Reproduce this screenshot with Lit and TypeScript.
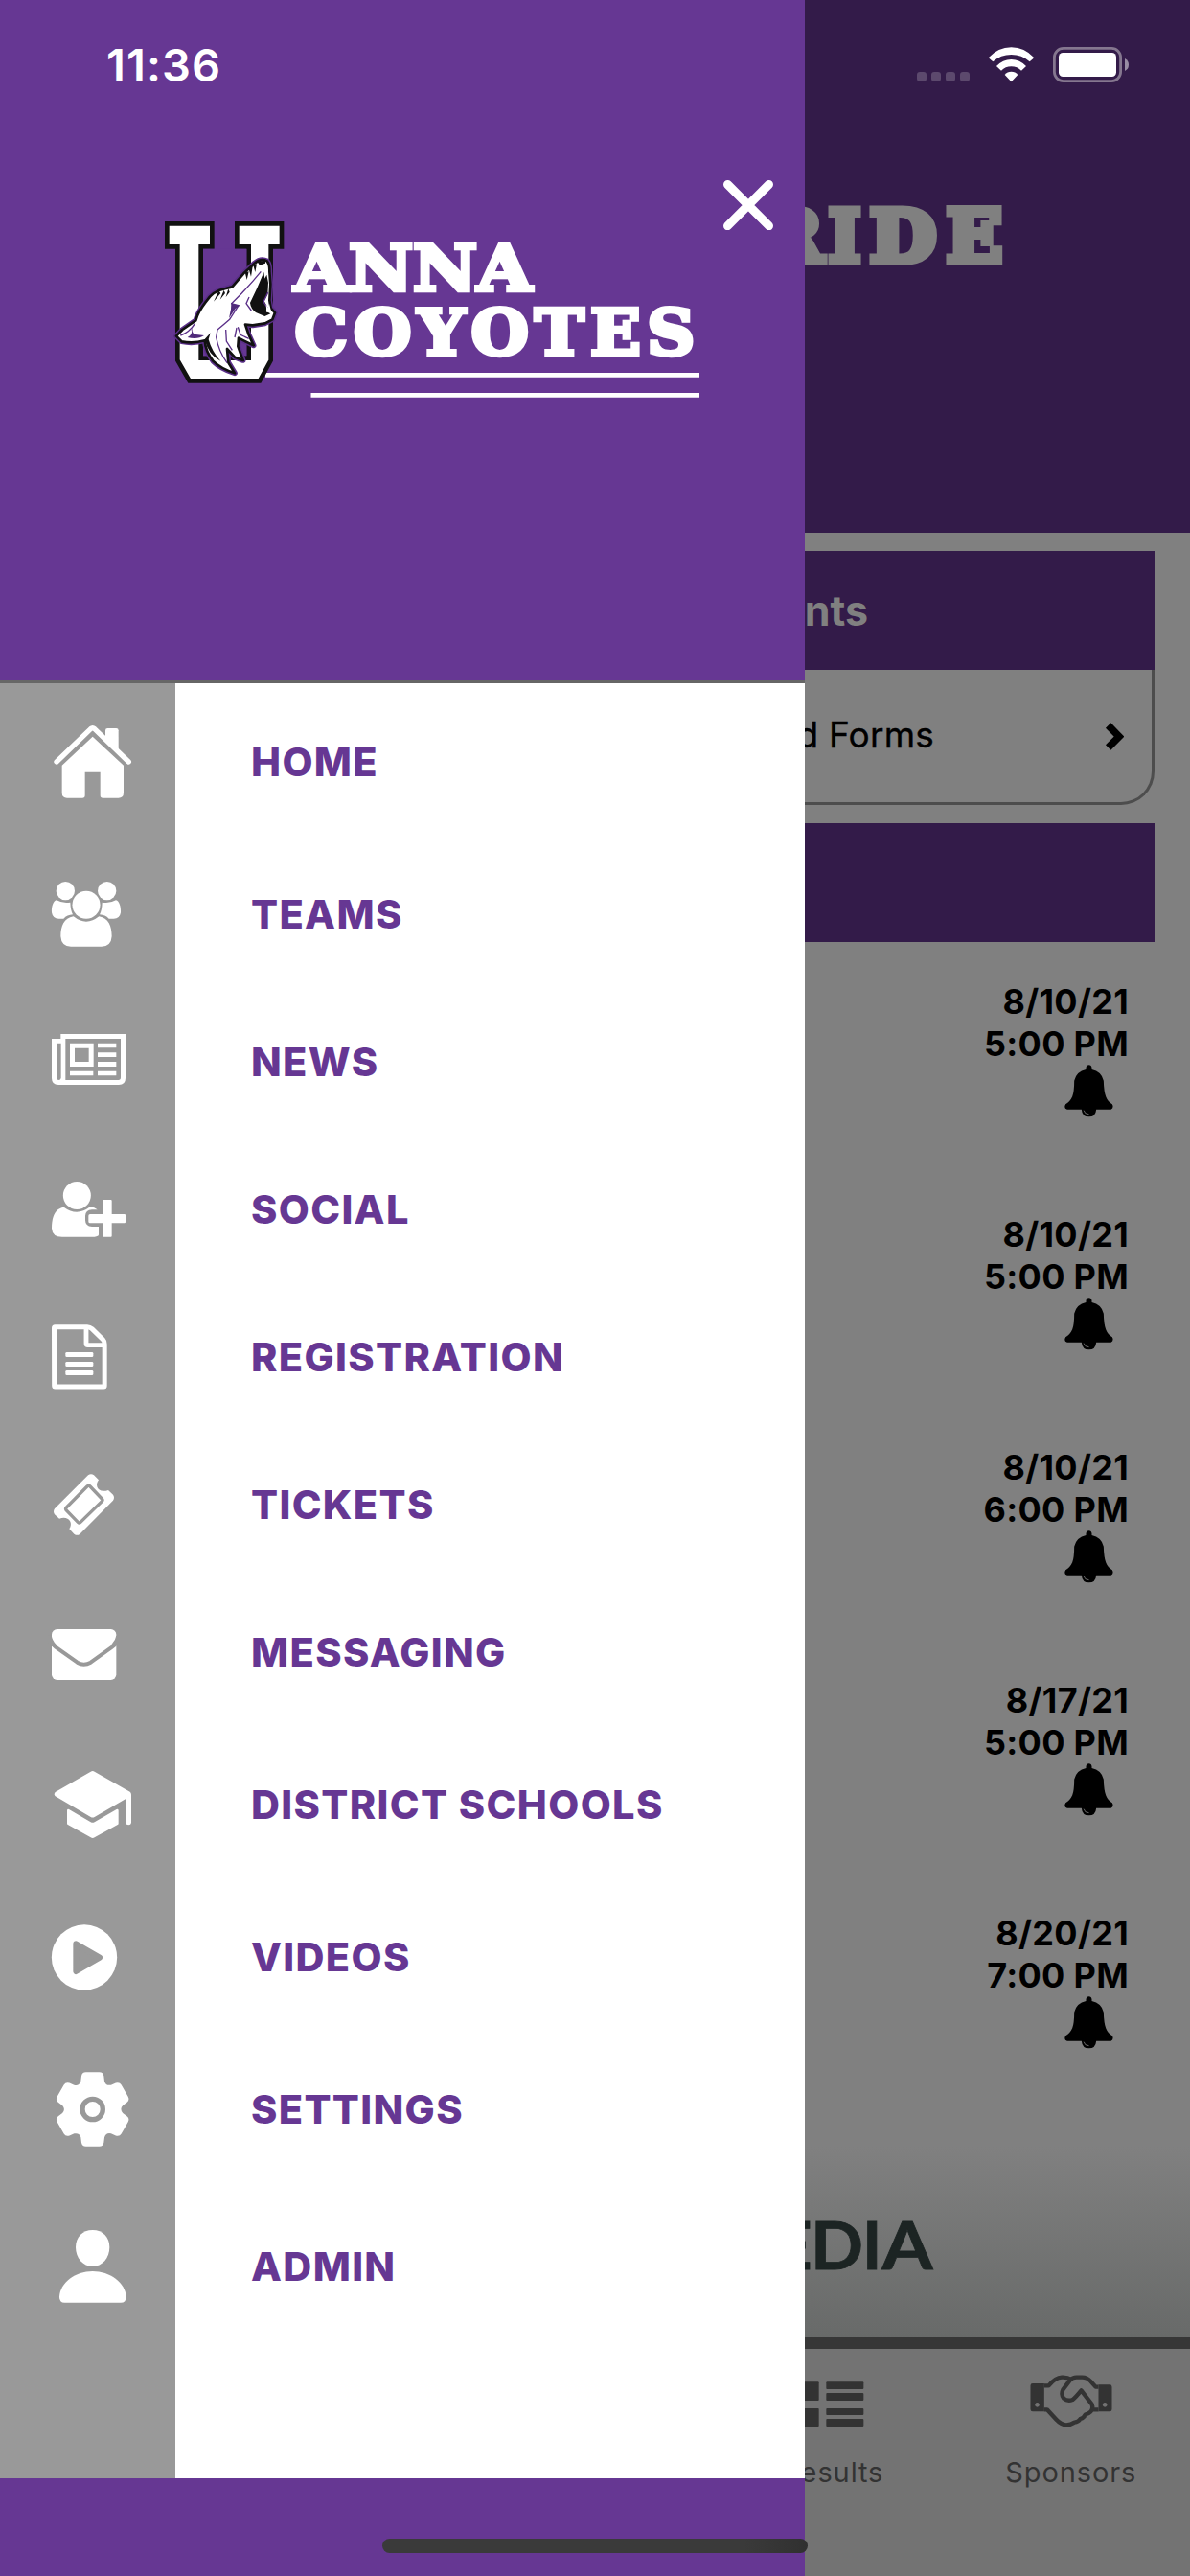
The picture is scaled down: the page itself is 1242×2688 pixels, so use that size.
import { LitElement, html, css, svg } from "lit";
import { customElement } from "lit/decorators.js";

type Icon = ReturnType<typeof svg>;

/* One tooth of the settings gear, rotated six times round the hub. */
function gearPath(cx: number, cy: number): string {
  const p = (x: number, y: number, k: number) => {
    const a = (k * Math.PI) / 3;
    const rx = x * Math.cos(a) - y * Math.sin(a);
    const ry = x * Math.sin(a) + y * Math.cos(a);
    return `${(cx + rx).toFixed(1)} ${(cy + ry).toFixed(1)}`;
  };
  let d = "";
  for (let k = 0; k < 6; k++) {
    d += `${k ? "L" : "M"}${p(-35, -104, k)}Q${p(-33, -116, k)} ${p(-21, -116, k)}`;
    d += `L${p(21, -116, k)}Q${p(33, -116, k)} ${p(35, -104, k)}`;
    d += `L${p(37, -88, k)}Q${p(41, -73, k)} ${p(57.5, -76, k)}`;
  }
  return d + "Z";
}

const BG = "#999999";

interface Entry {
  label: string;
  tall: boolean;
  cy: number;
  icon: Icon;
}

/* Icons are drawn on a grid of thirds of a pixel; cy is the row centre on it. */
const MENU: Entry[] = [
  {
    label: "HOME", tall: true, cy: 285,
    icon: svg`<path d="M87 285L194 182q6-5 12 0L313 285" fill="none" stroke="#fff" stroke-width="16" stroke-linecap="round"/>
      <path d="M240 207V187q0-7 7-7h27q7 0 7 7v62z"/>
      <path d="M200 206L297 296V382q0 16-16 16H232q-8 0-8-8V317H176V390q0 8-8 8H120q-16 0-16-16V296z"/>`,
  },
  {
    label: "TEAMS", tall: false, cy: 762,
    icon: svg`<circle cx="115" cy="689" r="29"/><circle cx="245" cy="689" r="29"/><circle cx="180" cy="733" r="43.5"/>
      <path d="M87 718C76 720 71 740 72 757Q75 776 94 776H109Q120 764 138 763Q131 750 130 725Q106 729 87 718z"/>
      <path d="M273 718C284 720 289 740 288 757Q285 776 266 776H251Q240 764 222 763Q229 750 230 725Q254 729 273 718z"/>
      <path d="M140 769C110 774 100 799 100 831Q102 863 132 863H228Q258 863 260 831C260 799 250 774 220 769Q180 801 140 769z"/>`,
  },
  {
    label: "NEWS", tall: false, cy: 1224,
    icon: svg`<path fill-rule="evenodd" d="M100 1137H303V1275q0 21-21 21H93q-21 0-21-21V1152H100zM115 1152V1281H281q7 0 7-8V1152zM87 1166V1274q1 7 7 7t7-7V1166zM129 1166H203V1239H129zM144 1181V1224H188V1181z"/>
      <path d="M216 1166h58v14h-58zM216 1195h58v14h-58zM216 1224h58v15h-58zM216 1253h58v14h-58zM129 1253h73v14h-73z"/>`,
  },
  {
    label: "SOCIAL", tall: false, cy: 246,
    icon: svg`<circle cx="151" cy="202.5" r="43.5"/>
      <path d="M110 239C82 243 72 270 72 305Q74 332 104 332H206Q219 331 219 325V300H198Q177 299 177 280V266Q178 248 198 247H215Q207 239 192 238Q151 270 110 239z"/>
      <path d="M234 216H257q3 0 3 3V261H300q3 0 3 3V286q0 3-3 3H260V329q0 3-3 3H234q-3 0-3-3V289H192q-5 0-5-5V266q0-5 5-5H231V219q0-3 3-3z"/>`,
  },
  {
    label: "REGISTRATION", tall: false, cy: 708,
    icon: svg`<path d="M79.500 617q0-3 3-3H183Q191 614 198 620L232 653Q237.500 659 237.500 668V798q0 3-3 3H83q-3 0-3-3z" fill="none" stroke="#fff" stroke-width="15"/>
      <path d="M180 614V666q0 5 5 5H237" fill="none" stroke="#fff" stroke-width="14.500"/>
      <rect x="115" y="693" width="87" height="15" rx="4"/><rect x="115" y="723" width="87" height="15" rx="4"/><rect x="115" y="750" width="87" height="15" rx="4"/>`,
  },
  {
    label: "TICKETS", tall: false, cy: 1170,
    icon: svg`<path d="M186 1078Q195 1071 204 1078L219 1093C206 1108 214 1136 249 1125L264 1139Q270 1148 264 1157L160 1262Q152 1269 142 1262L127 1246C142 1223 120 1203 96 1214L81 1201Q75 1192 81 1183z"/>
      <path d="M183 1113Q188 1109 192 1113L229 1152Q233 1156 229 1160L162 1225Q158 1229 154 1225L117 1187Q114 1183 118 1179z" fill="none" stroke=${BG} stroke-width="10"/>`,
  },
  {
    label: "MESSAGING", tall: false, cy: 252,
    icon: svg`<rect x="72" y="180" width="202" height="159" rx="17"/>
      <path d="M67 218Q76 230 84 236L152 284Q172 296 194 284L261 236Q270 230 279 218" fill="none" stroke=${BG} stroke-width="12"/>
      <path d="M60 200H71.500Q73 214 86 228L79 236L60 224zM286 200H274Q272 214 259 228L266 236L286 224z" fill=${BG}/>`,
  },
  {
    label: "DISTRICT SCHOOLS", tall: true, cy: 729,
    icon: svg`<path d="M194 626Q200 622 206 626L317 689Q321 692 321 698V786Q320 793 312.500 793T304 786V711L206 768Q200 771 194 768L83 703Q77 697 83 690z"/>
      <path d="M120 747Q121 742 126 744L194 784Q200 787 206 784L275 744Q280 742 281 747V788Q281 791 277 793L206 832Q200 836 194 832L124 793Q120 791 120 788z"/>`,
  },
  {
    label: "VIDEOS", tall: false, cy: 1206,
    icon: svg`<circle cx="174" cy="1207.500" r="102.500"/>
      <path d="M148 1165L222 1208L148 1251z" fill=${BG} stroke=${BG} stroke-width="18" stroke-linejoin="round"/>`,
  },
  {
    label: "SETTINGS", tall: true, cy: 303,
    icon: svg`<path d=${gearPath(200, 303)}/><circle cx="200" cy="303" r="32" fill="none" stroke=${BG} stroke-width="16"/>`,
  },
  {
    label: "ADMIN", tall: true, cy: 795,
    icon: svg`<path d="M200 681C232 681 253 704 253 735C253 768 230 795 200 795S147 768 147 735C147 704 168 681 200 681z"/>
      <path d="M96 890C98 846 146 810 200 810S303 846 305 890Q305 908 288 908H112Q96 908 96 890z"/>`,
  },
];

const EVENTS = [
  ["8/10/21", "5:00 PM"],
  ["8/10/21", "5:00 PM"],
  ["8/10/21", "6:00 PM"],
  ["8/17/21", "5:00 PM"],
  ["8/20/21", "7:00 PM"],
];

const sans = css`"Inter", "Liberation Sans", sans-serif`;

@customElement("team-logo")
class TeamLogo extends LitElement {
  static styles = css`
    :host { display: block; }
    svg { display: block; }
    .word { font-family: "DejaVu Serif", serif; font-weight: 700; font-size: 66px; fill: #fff; stroke: #fff; stroke-width: 4.4px; }
    .wide { letter-spacing: 6px; }
  `;
  render() {
    const head =
      "M57 392L76 372L118 343Q124 318 150 284Q172 250 212 243L232 238L268 196L302 164Q322 147 341 157Q350 168 349 190L352 230L349 280L353 305L366 319L358 340L335 352L296 358L273 356L283 386L299 421L268 406L252 398L250 424L266 468L240 458L216 432L220 475L240 508Q196 494 172 470Q148 438 146 406Q110 416 74 409z";
    return html`<svg width="570" height="200" viewBox="165 220 570 200">
      <path d="M277 391.300H730M324.500 412.300H730" stroke="#fff" stroke-width="4.800" />
      <g transform="translate(165 220) scale(.33333)">
        <path d="M28 40H169V112H134V461H284V112H247V40H387V112H353V468L318 532H98L61 468V112H28z" fill="#fff" stroke="#111" stroke-width="14"/>
        <path d="M141 119H277V454H141z" fill="#663793"/>
        <path d=${head} fill="#4f2a7a" stroke="#5a2f88" stroke-width="17" stroke-linejoin="round"/>
        <path d=${head} fill="#fff" stroke="#111" stroke-width="8" stroke-linejoin="round"/>
        <path d="M331 192L334 212L340 200L345 225L343 262L332 282L342 300L338 314L352 322L334 330L306 318Q290 306 288 288Q312 240 331 192z" fill="#111"/>
        <path d="M322 190Q296 222 262 258L230 290M344 255L330 285L344 306M285 270L276 290L292 312M228 290L252 296L224 340Q206 356 186 372L182 396Q190 440 216 476M212 372L214 408L232 436M250 364L258 388L284 400M70 390Q98 380 116 352M246 366L240 396" fill="none" stroke="#5a2f88" stroke-width="4"/>
        <path d="M229 290L256 296L242 306L222 336L228 308zM112 350Q100 372 112 386L144 390Q124 404 92 396Q110 386 104 372z" fill="#4f2a7a"/>
        <path d="M190 250L174 284L196 258zM206 248L194 278L210 258zM220 244L212 270L224 254zM272 192L278 216L284 190zM284 182L291 206L296 174zM298 170L304 192L309 166zM310 158L318 170L336 164L336 155zM146 402L164 382L158 402Q168 440 196 470Q156 450 146 402z" fill="#111"/>
        <path d="M338 292L344 304L348 290L354 314L340 318z" fill="#fff"/>
      </g>
      <text class="word" x="307" y="302.800" textLength="248" lengthAdjust="spacingAndGlyphs">ANNA</text>
      <text class="word wide" x="307.500" y="369.600" textLength="424" lengthAdjust="spacingAndGlyphs">COYOTES</text>
    </svg>`;
  }
}

@customElement("side-drawer")
class SideDrawer extends LitElement {
  static styles = css`
    :host { display: flex; flex-direction: column; width: 840px; height: 2688px; background: #663793; font-family: ${sans}; }
    .head { box-sizing: border-box; height: 713px; flex: none; border-bottom: 3px solid #666; display: flex; align-items: flex-start; padding: 188px 33px 0 165px; }
    .head team-logo { margin-top: 32px; margin-right: 20px; flex: none; }
    .close { display: block; flex: none; }
    ul { list-style: none; margin: 0; padding: 0; height: 1873px; flex: none; background: linear-gradient(to right, #999999 183px, #fff 183px); }
    li { display: flex; align-items: center; height: 154px; }
    li.tall { height: 164px; }
    li svg { display: block; width: 183px; height: 100px; margin-right: 79px; flex: none; fill: #fff; }
    .label { color: #663793; font-weight: 800; font-size: 41.5px; line-height: 50px; letter-spacing: 1.35px; white-space: nowrap; }
  `;
  render() {
    return html`
      <header class="head">
        <team-logo></team-logo>
        <svg class="close" width="52" height="52" viewBox="0 0 52 52">
          <path d="M4.500 4.500L47.500 47.700M47.500 4.500L4.500 47.700" stroke="#fff" stroke-width="9" stroke-linecap="round" />
        </svg>
      </header>
      <ul>
        ${MENU.map(
          (m) => html`<li class=${m.tall ? "tall" : ""}>
            <svg viewBox="-90 ${m.cy - 150} 549 300">${m.icon}</svg>
            <span class="label">${m.label}</span>
          </li>`,
        )}
      </ul>
    `;
  }
}

@customElement("status-bar")
class StatusBar extends LitElement {
  static styles = css`
    :host { display: flex; justify-content: space-between; align-items: flex-start; box-sizing: border-box; width: 1242px; height: 132px; padding: 39px 60px 0 111px; font-family: ${sans}; }
    .time { color: #fff; font-weight: 600; font-size: 47px; line-height: 57px; letter-spacing: 1.1px; }
    svg { display: block; margin-top: 1px; }
  `;
  render() {
    return html`<span class="time">11:36</span>
      <svg width="225" height="50" viewBox="957 40 225 50">
        <g fill="#5c496d">
          ${[957, 972, 987, 1002].map((x) => svg`<rect x=${x} y="75" width="10" height="10" rx="3"/>`)}
        </g>
        <g transform="translate(740 0) scale(.33333)" fill="#fff">
          <path d="M875 181Q905 148 946.500 148T1018 181L1004 193Q980 171 946.500 171T889 193z"/>
          <path d="M900 207Q920 186 946.500 186T993 207L978 221Q965 208 946.500 208T915 221z"/>
          <path d="M926 234Q934 224 946.500 224T967 234L946.500 256z"/>
        </g>
        <rect x="1100.400" y="50.400" width="69.200" height="34.200" rx="9.500" fill="none" stroke="#85778f" stroke-width="2.800" />
        <rect x="1105" y="55" width="60" height="25" rx="4.500" fill="#fff" />
        <path d="M1174 61Q1178 63 1178 67.500T1174 74z" fill="#998da4" />
      </svg>`;
  }
}

@customElement("home-screen")
class HomeScreen extends LitElement {
  static styles = css`
    :host { display: flex; flex-direction: column; width: 1242px; height: 2688px; background: #808080; font-family: ${sans}; color: #000; }
    .banner { height: 556px; flex: none; background: #331b49; }
    svg { display: block; }
    .pride { font-family: "DejaVu Serif", serif; font-weight: 700; font-size: 74.500px; fill: #808080; stroke: #808080; stroke-width: 8px; }
    .feed { flex: 1; display: flex; flex-direction: column; padding: 19px 37px 0; }
    .bar { box-sizing: border-box; height: 124px; flex: none; background: #331b49; color: #808080; font-weight: 700; font-size: 43px; line-height: 124px; text-align: right; padding-right: 299px; }
    .card { box-sizing: border-box; height: 141px; flex: none; border: 3px solid #4d4d4d; border-top: 0; border-radius: 0 0 35px 35px; margin-bottom: 19px; display: flex; align-items: center; justify-content: flex-end; padding-right: 29px; }
    .form { font-size: 37px; font-weight: 400; line-height: 44px; margin-right: 178px; margin-top: -2px; letter-spacing: 0.2px; -webkit-text-stroke: 0.4px #000; }
    .event { display: flex; flex-direction: column; align-items: flex-end; height: 243px; flex: none; padding-right: 27px; font-weight: 700; font-size: 36px; line-height: 44px; letter-spacing: 0.3px; }
    .events { padding-top: 40px; }
    .event svg { margin: 0 16px 0 0; }
    .sponsor { height: 199px; flex: none; background: linear-gradient(#808080, #686a69); }
    .media { font-family: "Lato", sans-serif; font-weight: 700; font-size: 69px; fill: #1c2423; stroke: #1c2423; stroke-width: 0.8px; }
    .tabs { box-sizing: border-box; height: 249px; flex: none; border-top: 12px solid #373737; background: #737373; display: flex; justify-content: flex-end; }
    .tab { width: 248.4px; display: flex; flex-direction: column; align-items: center; padding-top: 24px; color: #333; font-size: 29px; line-height: 36px; letter-spacing: 0.9px; }
    .tab svg { margin-bottom: 23px; }
  `;
  render() {
    return html`
      <div class="banner">
        <svg width="1242" height="556">
          <g class="pride">
            <text x="793" y="272.500" textLength="66" lengthAdjust="spacingAndGlyphs">R</text>
            <text x="865" y="272.500" textLength="33" lengthAdjust="spacingAndGlyphs">I</text>
            <text x="908" y="272.500" textLength="69" lengthAdjust="spacingAndGlyphs">D</text>
            <text x="988" y="272.500" textLength="58" lengthAdjust="spacingAndGlyphs">E</text>
          </g>
        </svg>
      </div>
      <div class="feed">
        <div class="bar">nts</div>
        <div class="card">
          <span class="form">d Forms</span>
          <svg width="20" height="31" viewBox="1001 637 60 93">
            <path d="M1012 649L1046 684L1012 718" fill="none" stroke="#000" stroke-width="23" />
          </svg>
        </div>
        <div class="bar"></div>
        <div class="events">
          ${EVENTS.map(
            ([d, t]) => html`<div class="event">
              <span>${d}</span><span>${t}</span>
              <svg width="51" height="55" viewBox="874.500 394 153 165">
                <path d="M942 409V404Q943 395 951 395T960 404V409Q990 415 997 444Q998 478 1004 494Q1010 510 1024 518Q1030 528 1020 534H974Q972 557 951 557T928 534H883Q871 530 878 518Q892 510 899 494Q905 478 905 444Q912 415 942 409z" />
                <path d="M935 537Q937 549 951 549" fill="none" stroke="#808080" stroke-width="2.500" />
              </svg>
            </div>`,
          )}
        </div>
      </div>
      <div class="sponsor">
        <svg width="1242" height="199" viewBox="0 2240 1242 199">
          <g class="media">
            <text x="808" y="2368">E</text>
            <text x="846" y="2368" textLength="55" lengthAdjust="spacingAndGlyphs">D</text>
            <text x="900" y="2368">I</text>
            <text x="920.500" y="2368" textLength="53" lengthAdjust="spacingAndGlyphs">A</text>
          </g>
        </svg>
      </div>
      <nav class="tabs">
        <div class="tab">
          <svg width="66" height="64" viewBox="50 705 198 192" fill="#333">
            <rect x="48" y="736" width="58" height="59" rx="3"/><rect x="48" y="819" width="58" height="57" rx="3"/>
            <rect x="129" y="736" width="117" height="23" rx="3"/><rect x="129" y="771" width="117" height="24" rx="3"/>
            <rect x="129" y="819" width="117" height="21" rx="3"/><rect x="129" y="852" width="117" height="24" rx="3"/>
          </svg>
          <span>Results</span>
        </div>
        <div class="tab">
          <svg width="86" height="64" viewBox="766.500 705 258 192">
            <path fill="#333" fill-rule="evenodd" d="M775 741H811V829H775q-7 0-7-7V748q0-7 7-7zM789 801a7 7 0 1 0 .1 0zM981 745H1016q7 0 7 7V822q0 7-7 7H981zM1001 801a7 7 0 1 0 .1 0z"/>
            <path fill="none" stroke="#333" stroke-width="13" stroke-linejoin="round" d="M811 748H825Q846 723 866 722Q884 721 896 729M981 752H972L956 734Q945 722 930 722H912Q900 722 892 731L870 760Q862 776 872 788Q884 798 900 792Q908 786 927 763L960 806Q966 820 956 830Q950 837 940 838Q936 848 924 852Q918 862 906 863Q894 871 880 871Q864 870 849 854L820 823H811M981 823H962"/>
          </svg>
          <span>Sponsors</span>
        </div>
      </nav>
    `;
  }
}

@customElement("app-root")
class AppRoot extends LitElement {
  static styles = css`
    :host { display: block; position: relative; width: 1242px; height: 2688px; overflow: hidden; }
    .layer { position: absolute; top: 0; left: 0; }
    .indicator { position: absolute; left: 399px; top: 2649px; width: 444px; height: 15px; border-radius: 8px; background: linear-gradient(to right, #3a3a3a 85%, #303030); }
  `;
  render() {
    return html`
      <home-screen></home-screen>
      <side-drawer class="layer"></side-drawer>
      <status-bar class="layer"></status-bar>
      <div class="indicator"></div>
    `;
  }
}
